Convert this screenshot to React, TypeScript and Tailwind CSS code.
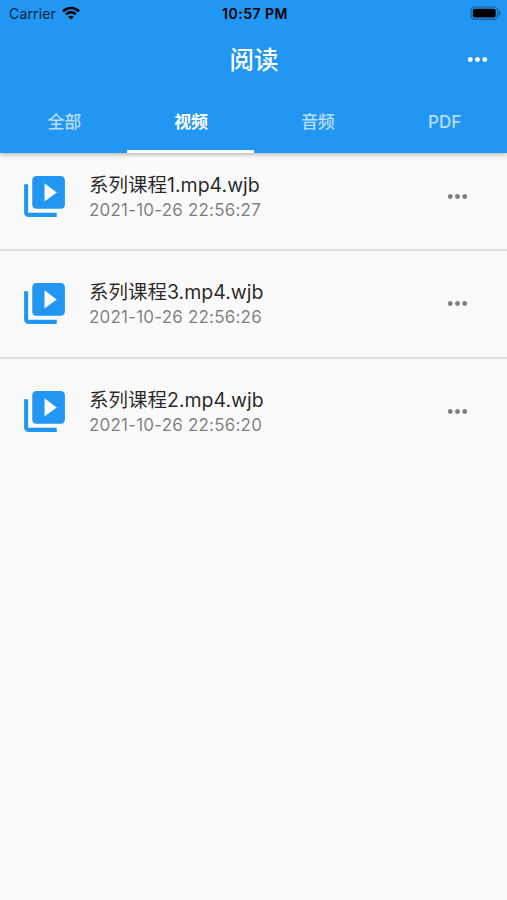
import { useState } from "react";

type Archivo = {
  id: number;
  nombre: string;
  fecha: string;
};

const tabs = ["全部", "视频", "音频", "PDF"];

const archivos: Archivo[] = [
  { id: 1, nombre: "系列课程1.mp4.wjb", fecha: "2021-10-26 22:56:27" },
  { id: 3, nombre: "系列课程3.mp4.wjb", fecha: "2021-10-26 22:56:26" },
  { id: 2, nombre: "系列课程2.mp4.wjb", fecha: "2021-10-26 22:56:20" },
];

function MoreIcon() {
  return (
    <svg viewBox="0 0 24 24" className="size-[29px] shrink-0" fill="currentColor">
      <path d="M6 10c-1.1 0-2 .9-2 2s.9 2 2 2 2-.9 2-2-.9-2-2-2zm12 0c-1.1 0-2 .9-2 2s.9 2 2 2 2-.9 2-2-.9-2-2-2zm-6 0c-1.1 0-2 .9-2 2s.9 2 2 2 2-.9 2-2-.9-2-2-2z" />
    </svg>
  );
}

function VideoIcon() {
  return (
    <svg viewBox="0 0 24 24" className="size-[49px] shrink-0 text-[#2196f3]" fill="currentColor">
      <path d="M4 6H2v14c0 1.1.9 2 2 2h14v-2H4V6zm16-4H8c-1.1 0-2 .9-2 2v12c0 1.1.9 2 2 2h12c1.1 0 2-.9 2-2V4c0-1.1-.9-2-2-2zm-8 12.5v-9l6 4.5-6 4.5z" />
    </svg>
  );
}

function StatusBar() {
  return (
    <div className="grid h-[27px] grid-cols-3 items-center pl-[9px] pr-[6px] text-black">
      <div className="flex items-center gap-[6px]">
        <span className="text-[14px] leading-none tracking-[0.15px] text-black/80">Carrier</span>
        <svg viewBox="0 0 18 14" className="mb-[2px] h-[14px] w-[18px]" fill="none" stroke="currentColor" strokeWidth="2.6">
          <path d="M1 5.2C5.5.9 12.5.9 17 5.2" />
          <path d="M4 8.4c2.9-2.7 7.1-2.7 10 0" />
          <path d="M9 13.6 6.2 10.8c1.6-1.4 4-1.4 5.6 0z" fill="currentColor" stroke="none" />
        </svg>
      </div>
      <span className="whitespace-nowrap text-center text-[14px] font-semibold leading-none tracking-[0.5px]">10:57 PM</span>
      <svg viewBox="0 0 31 15" className="h-[15px] w-[31px] justify-self-end">
        <rect x="1" y="1" width="26.5" height="12.4" rx="3.8" fill="none" stroke="#000" strokeOpacity=".4" strokeWidth="1.2" />
        <rect x="2.8" y="2.8" width="22.9" height="8.8" rx="2" />
        <path d="M28.8 5v4.6c1-.4 1.700-1.300 1.700-2.300S29.800 5.400 28.800 5z" fillOpacity=".45" />
      </svg>
    </div>
  );
}

export default function App() {
  const [activo, setActivo] = useState(1);

  return (
    <div className="min-h-[900px] w-full bg-[#fafafa] font-[Inter,'Noto_Sans_CJK_SC',sans-serif]">
      <header className="relative h-[152.5px] bg-[#2196f3] text-white shadow-[0_1px_5px_rgba(0,0,0,0.35)]">
        <StatusBar />
        <div className="grid h-[65px] grid-cols-[60px_1fr_60px] items-center">
          <span />
          <h1 className="pl-px pt-[2px] text-center text-[24.5px] font-medium leading-none">阅读</h1>
          <button className="flex justify-center">
            <MoreIcon />
          </button>
        </div>
        <nav className="grid h-[60.500px] grid-cols-4">
          {tabs.map((tab, i) => (
            <button
              key={tab}
              onClick={() => setActivo(i)}
              className={
                i === activo
                  ? "border-b-[3px] border-white pl-[2px] pt-[3px] text-[17px] font-bold leading-none"
                  : "border-b-[3px] border-transparent pl-[2px] pt-[3px] text-[17px] font-medium leading-none text-white/70"
              }
            >
              {tab}
            </button>
          ))}
        </nav>
      </header>

      <ul>
        {archivos.map((a) => (
          <li
            key={a.id}
            className="flex h-[107.5px] items-center border-b-2 border-[#dedede] pl-5 pr-[35px] first:h-[98.5px] first:pb-[8px] last:border-transparent"
          >
            <VideoIcon />
            <div className="ml-5 flex-1 pt-[3px]">
              <p className="text-[19.5px] leading-[25px] text-black/85">{a.nombre}</p>
              <p className="text-[17px] leading-[25px] tracking-[0.2px] text-black/50">{a.fecha}</p>
            </div>
            <button className="text-[#808080]">
              <MoreIcon />
            </button>
          </li>
        ))}
      </ul>
    </div>
  );
}
